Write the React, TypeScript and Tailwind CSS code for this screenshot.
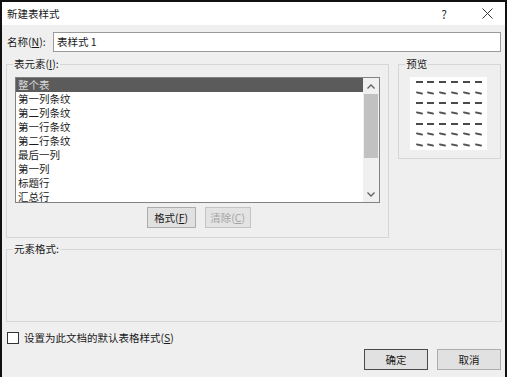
import React from "react";

const FONT = { fontFamily: '"Noto Sans CJK SC", "Liberation Sans", sans-serif' };

const items = [
  "整个表",
  "第一列条纹",
  "第二列条纹",
  "第一行条纹",
  "第二行条纹",
  "最后一列",
  "第一列",
  "标题行",
  "汇总行",
];

const Chevron = ({ up }: { up?: boolean }) => (
  <svg width="8" height="5" viewBox="0 0 8 5" className="block">
    <polyline
      points={up ? "0.5,4.5 4,1 7.5,4.5" : "0.5,0.5 4,4 7.5,0.5"}
      fill="none"
      stroke="#606060"
      strokeWidth="1.3"
    />
  </svg>
);

const PreviewGrid = () => {
  const rows = [0, 1, 2, 3, 4, 5, 6];
  const cols = [0, 1, 2, 3, 4, 5];
  return (
    <div className="w-[77px] h-[73px] bg-white flex flex-col px-[3px]">
      {rows.map((r) => (
        <div key={r} className="flex-1 grid grid-cols-6 items-center">
          {cols.map((c) => (
            <div key={c} className="flex justify-center">
              <div
                className={
                  r % 2 === 1 || r === 6
                    ? "w-[7px] h-[2px] bg-[#555] rounded-[1px] skew-y-12"
                    : "w-[7px] h-[2px] bg-[#4a4a4a]"
                }
              />
            </div>
          ))}
        </div>
      ))}
    </div>
  );
};

const Btn = ({
  children,
  w,
  disabled,
  primary,
}: {
  children: React.ReactNode;
  w: string;
  disabled?: boolean;
  primary?: boolean;
}) => (
  <button
    className={
      "h-[21px] text-[10.5px] leading-[14px] flex items-center justify-center border " +
      w +
      (disabled
        ? " bg-[#e3e3e3] border-[#c4c4c4] text-[#a3a3a3]"
        : primary
        ? " bg-[#e1e1e1] border-[#4a4a4a] text-[#1a1a1a]"
        : " bg-[#e1e1e1] border-[#adadad] text-[#1a1a1a]")
    }
  >
    {children}
  </button>
);

export default function App() {
  return (
    <div
      style={FONT}
      className="w-[507px] h-[377px] bg-[#efefef] border-x-2 border-t-2 border-[#111] flex flex-col text-[#1a1a1a] overflow-hidden"
    >
      {/* title bar */}
      <div className="h-[23px] bg-white flex items-center pl-[5px] shrink-0">
        <span className="text-[10.5px] leading-[14px]">新建表样式</span>
        <span className="ml-auto text-[12px] leading-[14px] text-[#333] mr-[35px]">?</span>
        <svg width="11" height="11" viewBox="0 0 11 11" className="mr-[12px]">
          <path d="M0.5 0.5 L10.5 10.5 M10.5 0.5 L0.5 10.5" stroke="#333" strokeWidth="1" />
        </svg>
      </div>

      <div className="flex flex-col px-[4px]">
        {/* name row */}
        <div className="flex items-center mt-[7px] pl-[1px]">
          <span className="text-[10.5px] leading-[14px] w-[46px]">
            名称(<u>N</u>):
          </span>
          <div className="h-[20px] w-[449px] bg-white border border-[#9a9a9a] flex items-center pl-[3px] text-[10.5px] leading-[14px]">
            表样式 1
          </div>
        </div>

        {/* groups */}
        <div className="flex mt-[5px]">
          <fieldset className="w-[384px] h-[181px] border border-[#d6d6d6] flex flex-col">
            <legend className="ml-[6px] px-[1px] text-[10.5px] leading-[14px]">
              表元素(<u>I</u>):
            </legend>
            <div className="mt-[6px] ml-[8px] w-[365px] h-[126px] bg-white border border-[#828282] flex">
              <div className="flex-1 flex flex-col">
                {items.map((t, i) => (
                  <div
                    key={t}
                    className={
                      "h-[14px] pl-[2px] text-[10.5px] leading-[14px] whitespace-nowrap " +
                      (i === 0 ? "bg-[#5b5b5b] text-[#d8d8d8]" : "")
                    }
                  >
                    {t}
                  </div>
                ))}
              </div>
              <div className="w-[16px] bg-[#f0f0f0] flex flex-col items-center">
                <div className="h-[16px] flex items-center justify-center">
                  <Chevron up />
                </div>
                <div className="w-[14px] h-[64px] bg-[#c1c1c1]" />
                <div className="flex-1" />
                <div className="h-[16px] flex items-center justify-center">
                  <Chevron />
                </div>
              </div>
            </div>
            <div className="flex justify-center gap-[9px] mt-[4px] pl-[2px]">
              <Btn w="w-[49px]">
                格式(<u>F</u>)
              </Btn>
              <Btn w="w-[46px]" disabled>
                清除(<u>C</u>)
              </Btn>
            </div>
          </fieldset>

          <fieldset className="ml-[9px] w-[103px] h-[102px] border border-[#d6d6d6] flex flex-col">
            <legend className="ml-[6px] px-[1px] text-[10.5px] leading-[14px]">预览</legend>
            <div className="mt-[6px] ml-[11px]">
              <PreviewGrid />
            </div>
          </fieldset>
        </div>

        <fieldset className="mt-[4px] w-[496px] h-[80px] border border-[#d6d6d6]">
          <legend className="ml-[6px] px-[1px] text-[10.5px] leading-[14px]">元素格式:</legend>
        </fieldset>

        {/* default checkbox */}
        <div className="flex items-center mt-[9px] pl-[1px]">
          <div className="w-[12px] h-[12px] bg-white border border-[#333]" />
          <span className="ml-[5px] text-[10.5px] leading-[14px]">
            设置为此文档的默认表格样式(<u>S</u>)
          </span>
        </div>

        {/* footer */}
        <div className="flex justify-end gap-[9px] mt-[4px]">
          <Btn w="w-[64px]" primary>
            确定
          </Btn>
          <Btn w="w-[64px]">取消</Btn>
        </div>
      </div>
    </div>
  );
}
